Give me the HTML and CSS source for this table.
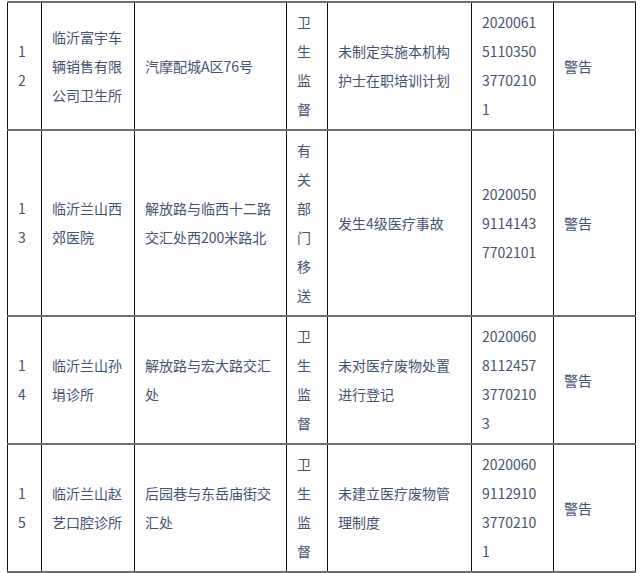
FILE: index.html
```html
<!DOCTYPE html>
<html lang="zh">
<head>
<meta charset="utf-8">
<link rel="stylesheet" href="styles.css">
</head>
<body>
<table class="records">
  <colgroup>
    <col class="c-no"><col class="c-name"><col class="c-addr"><col class="c-src"><col class="c-fact"><col class="c-code"><col class="c-res">
  </colgroup>
  <tbody>
    <tr>
      <td>12</td>
      <td>临沂富宇车辆销售有限公司卫生所</td>
      <td>汽摩配城A区76号</td>
      <td>卫生监督</td>
      <td>未制定实施本机构护士在职培训计划</td>
      <td>2020061511035037702101</td>
      <td>警告</td>
    </tr>
    <tr>
      <td>13</td>
      <td>临沂兰山西郊医院</td>
      <td>解放路与临西十二路交汇处西200米路北</td>
      <td>有关部门移送</td>
      <td>发生4级医疗事故</td>
      <td>202005091141437702101</td>
      <td>警告</td>
    </tr>
    <tr>
      <td>14</td>
      <td>临沂兰山孙埍诊所</td>
      <td>解放路与宏大路交汇处</td>
      <td>卫生监督</td>
      <td>未对医疗废物处置进行登记</td>
      <td>2020060811245737702103</td>
      <td>警告</td>
    </tr>
    <tr>
      <td>15</td>
      <td>临沂兰山赵艺口腔诊所</td>
      <td>后园巷与东岳庙街交汇处</td>
      <td>卫生监督</td>
      <td>未建立医疗废物管理制度</td>
      <td>2020060911291037702101</td>
      <td>警告</td>
    </tr>
  </tbody>
</table>
</body>
</html>
```

FILE: styles.css
```css
html, body {
  margin: 0;
  padding: 0;
  background: #ffffff;
}

body {
  padding: 1px 0 0 7px;
  font-family: "Noto Sans CJK SC", "Noto Sans", sans-serif;
  font-size: 14px;
  color: #46536f;
}

.records {
  border-collapse: collapse;
  table-layout: fixed;
  width: 629px;
}

.c-no { width: 34px; }
.c-name { width: 93px; }
.c-addr { width: 152px; }
.c-src { width: 41px; }
.c-fact { width: 144px; }
.c-code { width: 82px; }
.c-res { width: 82px; }

.records td {
  border-top: 2px solid #6e6e6e;
  border-bottom: 2px solid #6e6e6e;
  border-left: 1px solid #111111;
  border-right: 1px solid #111111;
  padding: 5px 10px 5px 10px;
  line-height: 29px;
  vertical-align: middle;
  word-break: break-all;
  text-align: left;
}
```
